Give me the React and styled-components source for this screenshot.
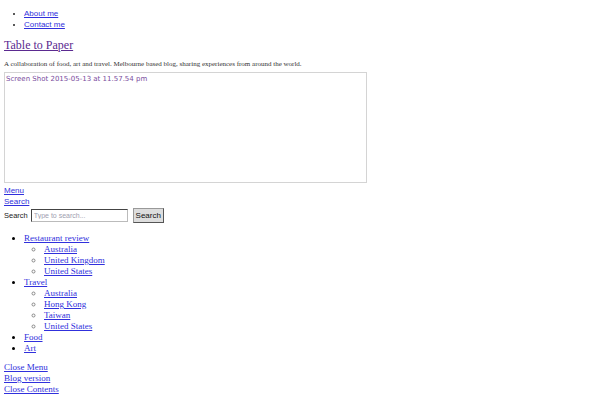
import React from "react";
import styled, { createGlobalStyle } from "styled-components";

const Global = createGlobalStyle`
  html, body { margin: 0; padding: 0; background: #fff; }
  body { padding: 4px; font-family: "Liberation Serif", serif; color: #222; }
  a { color: #3030dc; }
`;

const TopNav = styled.ul`
  margin: 4px 0 0;
  padding: 0 0 0 20px;
  font-family: "Liberation Sans", Arial, sans-serif;
  font-size: 8px;
  line-height: 11px;
  list-style: disc;
`;

const SiteTitle = styled.h1`
  margin: 7px 0 0;
  font-size: 12px;
  line-height: 16px;
  font-weight: normal;
  a { color: #5b2a90; }
`;

const Tagline = styled.p`
  margin: 6px 0 0;
  font-size: 7px;
  line-height: 10px;
  color: #333;
`;

const ImageBox = styled.div`
  margin-top: 3px;
  width: 360px;
  height: 108px;
  border: 1px solid #d4d4d4;
  font-family: "DejaVu Sans", sans-serif;
  font-size: 7px;
  line-height: 10px;
  color: #7a4d9e;
  padding: 1px 0 0 1px;
`;

const SansLink = styled.a`
  display: block;
  font-family: "Liberation Sans", Arial, sans-serif;
  font-size: 8px;
  line-height: 11px;
`;

const SearchForm = styled.form`
  display: flex;
  align-items: center;
  gap: 3px;
  height: 16px;
  margin: 0;
  font-family: "Liberation Sans", Arial, sans-serif;
  font-size: 7.5px;
`;

const SearchInput = styled.input`
  box-sizing: border-box;
  width: 97px;
  height: 13px;
  margin: 0;
  padding: 0 2px;
  border: 1px solid #444;
  border-right-color: #bbb;
  border-bottom-color: #bbb;
  font-family: "Liberation Sans", Arial, sans-serif;
  font-size: 7px;
  &::placeholder { color: #a0a0b0; }
`;

const SearchButton = styled.button`
  box-sizing: border-box;
  margin-left: 2px;
  width: 31px;
  height: 15px;
  padding: 0;
  background: #ddd;
  border: 1px solid #999;
  border-right-color: #555;
  border-bottom-color: #555;
  font-family: "Liberation Sans", Arial, sans-serif;
  font-size: 8px;
  color: #111;
`;

const CatList = styled.ul`
  margin: ${(p) => (p.$nested ? "0" : "10px 0 0")};
  padding: 0 0 0 20px;
  font-size: 9px;
  line-height: 11px;
  list-style: ${(p) => (p.$nested ? "circle" : "disc")};
  li::marker { color: ${(p) => (p.$nested ? "#888" : "#000")}; }
`;

const FooterLinks = styled.div`
  margin-top: 8px;
  display: flex;
  flex-direction: column;
  font-size: 9px;
  line-height: 11px;
`;

const categories = [
  { name: "Restaurant review", subs: ["Australia", "United Kingdom", "United States"] },
  { name: "Travel", subs: ["Australia", "Hong Kong", "Taiwan", "United States"] },
  { name: "Food", subs: [] },
  { name: "Art", subs: [] },
];

export default function App() {
  return (
    <>
      <Global />
      <TopNav>
        <li><a href="#">About me</a></li>
        <li><a href="#">Contact me</a></li>
      </TopNav>
      <SiteTitle><a href="#">Table to Paper</a></SiteTitle>
      <Tagline>A collaboration of food,  art and travel. Melbourne based blog, sharing experiences from around the world.</Tagline>
      <ImageBox>Screen Shot 2015-05-13 at 11.57.54 pm</ImageBox>
      <SansLink href="#" style={{ marginTop: 2 }}>Menu</SansLink>
      <SansLink href="#">Search</SansLink>
      <SearchForm onSubmit={(e) => e.preventDefault()}>
        <span>Search</span>
        <SearchInput placeholder="Type to search..." />
        <SearchButton type="submit">Search</SearchButton>
      </SearchForm>
      <CatList>
        {categories.map((c) => (
          <li key={c.name}>
            <a href="#">{c.name}</a>
            {c.subs.length > 0 && (
              <CatList $nested>
                {c.subs.map((s) => (
                  <li key={s}><a href="#">{s}</a></li>
                ))}
              </CatList>
            )}
          </li>
        ))}
      </CatList>
      <FooterLinks>
        <a href="#">Close Menu</a>
        <a href="#">Blog version</a>
        <a href="#">Close Contents</a>
      </FooterLinks>
    </>
  );
}
